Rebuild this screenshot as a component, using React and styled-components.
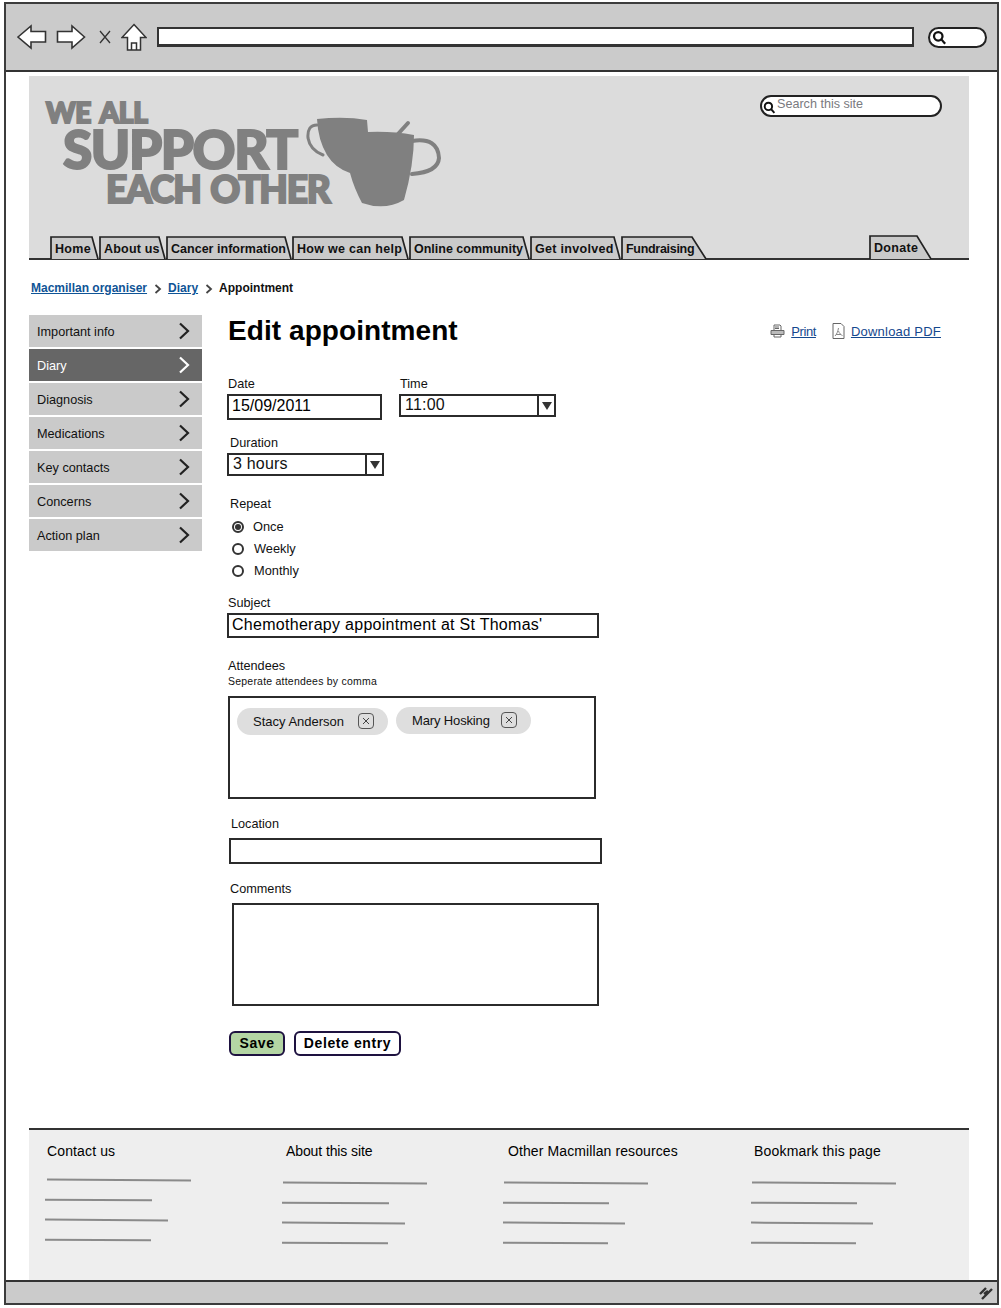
import React from "react";
import styled, { createGlobalStyle } from "styled-components";

const Global = createGlobalStyle`
  html, body { margin: 0; padding: 0; background: #fff; }
  body { font-family: "Liberation Sans", Arial, sans-serif; color: #111; }
  * { box-sizing: border-box; }
`;

const Page = styled.div`
  width: 1001px;
  height: 1308px;
  padding: 2px 2px 3px 4px;
`;
const Win = styled.div`
  height: 100%;
  border: 2px solid #3c3c3c;
  display: flex;
  flex-direction: column;
`;
const Toolbar = styled.div`
  height: 68px;
  flex: none;
  background: #cbcbcb;
  border-bottom: 2px solid #333;
  display: flex;
  align-items: center;
  padding: 0 0 0 11px;
`;
const NavIcon = styled.svg`
  display: block;
  flex: none;
  margin-right: ${p => p.$mr || 0}px;
`;
const AddressBar = styled.div`
  width: 757px;
  height: 20px;
  background: #fff;
  border: 2px solid #333;
  border-bottom-width: 3px;
  margin-right: 14px;
  flex: none;
`;
const BrowserSearch = styled.div`
  width: 59px;
  height: 21px;
  background: #fff;
  border: 2px solid #222;
  border-radius: 11px;
  display: flex;
  align-items: center;
  padding-left: 2px;
`;
const Viewport = styled.div`
  flex: 1;
  min-height: 0;
  padding: 4px 28px 0 23px;
  display: flex;
  flex-direction: column;
`;
const Header = styled.header`
  height: 184px;
  flex: none;
  background: #dcdcdc;
  border-bottom: 2px solid #333;
  display: flex;
  flex-direction: column;
`;
const HeaderTop = styled.div`
  height: 158px;
  flex: none;
  display: flex;
  justify-content: space-between;
  align-items: flex-start;
  padding: 19px 27px 0 16px;
`;
const Logo = styled.div`
  display: flex;
  align-items: flex-start;
  padding-top: 4px;
`;
const LogoText = styled.div`
  width: 261px;
  color: #808080;
  font-family: "Lato", "Liberation Sans", sans-serif;
  font-weight: 900;
  -webkit-text-stroke: 2px #808080;
`;
const LogoLine = styled.div`
  font-size: ${p => p.$size}px;
  line-height: ${p => p.$lh}px;
  margin-left: ${p => p.$ml}px;
  letter-spacing: ${p => p.$ls}px;
  word-spacing: ${p => p.$ws || 0}px;
  white-space: nowrap;
`;
const CupArt = styled.svg`
  display: block;
  flex: none;
  margin-top: 18px;
`;
const SiteSearch = styled.div`
  width: 182px;
  height: 22px;
  background: #fff;
  border: 2px solid #222;
  border-radius: 12px;
  display: flex;
  align-items: flex-start;
  padding: 0 0 0 1px;
  color: #7a7a80;
  font-size: 12.6px;
  line-height: 14px;
`;
const SearchGlass = styled.span`
  margin-top: 4px;
  line-height: 0;
`;
const SearchLabel = styled.span`
  margin-left: 1px;
`;
const Tabs = styled.nav`
  flex: 1;
  display: flex;
  align-items: flex-end;
  padding-left: 21px;
`;
const Tab = styled.div`
  position: relative;
  width: ${p => p.$w}px;
  height: ${p => p.$h}px;
  margin-left: ${p => p.$ml || 0}px;
  padding: 6px 0 0 5px;
  font-size: 12.5px;
  line-height: 16px;
  font-weight: 700;
  letter-spacing: ${p => p.$ls ?? 0.2}px;
  white-space: nowrap;
  flex: none;
`;
const TabLabel = styled.span`
  position: relative;
`;
const TabShape = styled.svg`
  position: absolute;
  left: 0;
  top: 0;
`;
const Crumbs = styled.div`
  height: 55px;
  flex: none;
  padding: 20px 0 0 2px;
  display: flex;
  align-items: flex-start;
  font-size: 12px;
  line-height: 16px;
  font-weight: 700;
`;
const CrumbLink = styled.a`
  color: #0f5496;
  text-decoration: underline;
`;
const CrumbSep = styled.svg`
  margin: 4px 6px 0 7px;
  flex: none;
`;
const Main = styled.div`
  display: flex;
  flex: 1;
  min-height: 0;
  gap: 26px;
`;
const Sidebar = styled.nav`
  width: 173px;
  flex: none;
  display: flex;
  flex-direction: column;
  gap: 2px;
`;
const SideItem = styled.div`
  height: 32px;
  background: ${p => (p.$active ? "#666" : "#cacaca")};
  color: ${p => (p.$active ? "#fff" : "#111")};
  display: flex;
  align-items: center;
  justify-content: space-between;
  padding: 0 12px 0 8px;
  font-size: 12.7px;
`;
const SideLabel = styled.span`
  padding-top: 2px;
`;
const Content = styled.div`
  flex: 1;
  min-width: 0;
  padding-right: 28px;
`;
const TitleRow = styled.div`
  height: 32px;
  display: flex;
  justify-content: space-between;
  align-items: center;
`;
const Title = styled.h1`
  margin: 0;
  font-size: 28px;
  line-height: 32px;
  font-weight: 700;
  letter-spacing: 0.07px;
  color: #000;
`;
const Actions = styled.div`
  display: flex;
  align-items: center;
  font-size: 13px;
`;
const ActionIcon = styled.svg`
  flex: none;
  margin: 0 ${p => p.$mr}px 0 ${p => p.$ml || 0}px;
`;
const ActionLink = styled.a`
  color: #14488e;
  text-decoration: underline;
  letter-spacing: ${p => p.$ls}px;
`;
const Row = styled.div`
  display: flex;
  align-items: flex-start;
  gap: 17px;
  margin-top: ${p => p.$mt || 0}px;
`;
const Field = styled.div`
  margin-top: ${p => p.$mt || 0}px;
`;
const Label = styled.div`
  font-size: 12.7px;
  height: 14px;
  line-height: 16px;
  margin: 0 0 ${p => p.$gap ?? 4}px ${p => p.$ml || 0}px;
`;
const Hint = styled.div`
  font-size: 10.5px;
  line-height: 13px;
  letter-spacing: 0.22px;
  margin-top: 3px;
  margin-bottom: 8px;
`;
const TextBox = styled.div`
  width: ${p => p.$w}px;
  height: ${p => p.$h}px;
  margin-left: ${p => p.$ml || 0}px;
  background: #fff;
  border: 2px solid #2b2b2b;
  padding-left: 3px;
  font-size: 16px;
  line-height: ${p => p.$h - 6}px;
  color: #000;
  letter-spacing: ${p => p.$ls || 0}px;
`;
const Select = styled.div`
  width: ${p => p.$w}px;
  height: 23px;
  margin-left: ${p => p.$ml || 0}px;
  border: 2px solid #2b2b2b;
  display: flex;
  font-size: 16px;
  line-height: 17px;
`;
const SelectValue = styled.div`
  flex: 1;
  padding-left: 4px;
  letter-spacing: 0.2px;
`;
const SelectArrow = styled.div`
  width: 17px;
  border-left: 2px solid #2b2b2b;
  display: flex;
  align-items: center;
  justify-content: center;
  &::after {
    content: "";
    border-left: 5px solid transparent;
    border-right: 5px solid transparent;
    border-top: 8px solid #333;
  }
`;
const Radios = styled.div`
  margin: 5px 0 0 4px;
`;
const RadioRow = styled.div`
  height: 22px;
  display: flex;
  align-items: center;
  font-size: 12.8px;
`;
const RadioDot = styled.span`
  width: 12px;
  height: 12px;
  margin-top: 2px;
  border-radius: 50%;
  border: 2px solid #333;
  margin-right: ${p => (p.$on ? 9 : 10)}px;
  display: flex;
  align-items: center;
  justify-content: center;
  &::after {
    content: "";
    display: ${p => (p.$on ? "block" : "none")};
    width: 6px;
    height: 6px;
    border-radius: 50%;
    background: #333;
  }
`;
const ChipBox = styled.div`
  width: 368px;
  height: 103px;
  border: 2px solid #2b2b2b;
  display: flex;
  align-items: flex-start;
  gap: 8px;
  padding: 9px 0 0 7px;
`;
const Chip = styled.div`
  height: 27px;
  background: #dedede;
  border-radius: 14px;
  display: flex;
  align-items: center;
  padding: 0 14px 0 16px;
  font-size: 13px;
  letter-spacing: ${p => p.$ls || 0}px;
  gap: ${p => p.$gap}px;
  margin-top: ${p => p.$mt || 0}px;
`;
const ChipClose = styled.span`
  width: 16px;
  height: 16px;
  margin-top: -2px;
  border: 1px solid #555;
  border-radius: 4px;
  display: flex;
  align-items: center;
  justify-content: center;
`;
const Buttons = styled.div`
  display: flex;
  gap: 9px;
  margin: 25px 0 0 1px;
`;
const Button = styled.button`
  height: 25px;
  width: ${p => p.$w}px;
  padding: 0 0 2px;
  background: ${p => (p.$primary ? "#b4d5a4" : "#fff")};
  border: 2px solid #1e1240;
  border-radius: 6px;
  font-family: inherit;
  font-size: 14px;
  font-weight: 700;
  letter-spacing: 0.6px;
  color: #000;
`;
const Footer = styled.footer`
  height: 152px;
  flex: none;
  background: #eee;
  border-top: 2px solid #333;
  display: grid;
  grid-template-columns: 239px 222px 246px 1fr;
  padding: 13px 0 0 18px;
`;
const FootCol = styled.div``;
const FootTitle = styled.div`
  font-size: 14px;
  line-height: 16px;
  height: 36px;
  letter-spacing: ${p => p.$ls}px;
  color: #000;
`;
const FootLines = styled.div`
  padding-top: ${p => p.$top}px;
`;
const FootLine = styled.div`
  height: 2px;
  width: ${p => p.$w}px;
  background: #8a8a8a;
  margin: 0 0 18px ${p => p.$ml || 0}px;
  transform: rotate(0.4deg);
`;
const StatusBar = styled.div`
  height: 23px;
  flex: none;
  background: #cbcbcb;
  border-top: 2px solid #333;
  display: flex;
  justify-content: flex-end;
  align-items: center;
  padding-right: 3px;
`;

const Chevron = ({ color = "#222" }) => (
  <svg width="12" height="18" viewBox="0 0 12 18" fill="none">
    <path d="M2 1.5 L10 9 L2 16.5" stroke={color} strokeWidth="2.2" />
  </svg>
);

const Magnifier = ({ size = 12 }) => (
  <svg width={size} height={size} viewBox="0 0 12 12" fill="none">
    <circle cx="5" cy="5" r="3.4" stroke="#111" strokeWidth="1.8" />
    <path d="M7.5 7.5 L10.5 11" stroke="#111" strokeWidth="1.8" />
  </svg>
);

const CloseX = () => (
  <svg width="8" height="8" viewBox="0 0 8 8" fill="none">
    <path d="M1 1 L7 7 M7 1 L1 7" stroke="#444" strokeWidth="1" />
  </svg>
);

const Sep = () => (
  <CrumbSep width="8" height="10" viewBox="0 0 8 10" fill="none">
    <path d="M1.5 1 L6 5 L1.5 9" stroke="#444" strokeWidth="1.8" />
  </CrumbSep>
);

const tabs = [
  ["Home", 49, 0.3],
  ["About us", 67, 0.2],
  ["Cancer information", 126, 0.02],
  ["How we can help", 117, 0.3],
  ["Online community", 121, 0],
  ["Get involved", 91, 0.3],
  ["Fundraising", 85, -0.3],
];

const TabBox = ({ w, ml, ls, h = 24, children, last }) => (
  <Tab $w={w} $ml={ml} $ls={ls} $h={h}>
    <TabShape width={w + 2} height={h} viewBox={`0 0 ${w + 2} ${h}`}>
      <path d={`M1 ${h} V2 H${w - (last ? 14 : 7)} L${w} ${h} Z`} fill="#cacaca" />
      <path
        d={`M1 ${h} V2 H${w - (last ? 14 : 7)} L${w - (last ? 0 : 1)} ${h}`}
        fill="none"
        stroke="#222"
        strokeWidth="1.7"
      />
    </TabShape>
    <TabLabel>{children}</TabLabel>
  </Tab>
);

const side = ["Important info", "Diary", "Diagnosis", "Medications", "Key contacts", "Concerns", "Action plan"];

const footer = [
  ["Contact us", 0.13, [[144, 0], [107, -2], [123, -2], [106, -2]], 0],
  ["About this site", -0.1, [[144, -3], [107, -4], [123, -4], [106, -4]], 3],
  ["Other Macmillan resources", 0.1, [[144, -4], [106, -5], [122, -5], [105, -5]], 3],
  ["Bookmark this page", 0.18, [[144, -2], [106, -3], [122, -3], [105, -3]], 3],
];

export default function App() {
  return (
    <Page>
      <Global />
      <Win>
        <Toolbar>
          <NavIcon width="30" height="26" viewBox="0 0 30 26" $mr="9">
            <path d="M1 13 L14 2 V7.5 H28.5 V18 H14 V24 Z" fill="#fff" stroke="#333" strokeWidth="1.6" />
          </NavIcon>
          <NavIcon width="30" height="26" viewBox="0 0 30 26" $mr="12">
            <path d="M28.5 13 L16 2 V7.5 H1.5 V18 H16 V24 Z" fill="#fff" stroke="#333" strokeWidth="1.6" />
          </NavIcon>
          <NavIcon width="14" height="16" viewBox="0 0 14 16" $mr="9">
            <path d="M2 2 L12 14 M12 2 L2 14" stroke="#333" strokeWidth="1.3" fill="none" />
          </NavIcon>
          <NavIcon width="26" height="29" viewBox="0 0 26 29" $mr="10">
            <path d="M13 1.5 L25 14.5 H19.5 V27 H6.5 V14.5 H1 Z" fill="#fff" stroke="#333" strokeWidth="1.5" />
            <path d="M10.5 27 V20 H15.5 V27" fill="none" stroke="#333" strokeWidth="1.5" />
          </NavIcon>
          <AddressBar />
          <BrowserSearch>
            <Magnifier size={15} />
          </BrowserSearch>
        </Toolbar>
        <Viewport>
          <Header>
            <HeaderTop>
              <Logo>
                <LogoText>
                  <LogoLine $size={28} $lh={27} $ml={1} $ls={-0.3} $ws={3}>WE ALL</LogoLine>
                  <LogoLine $size={53} $lh={45} $ml={18} $ls={-1.4}>SUPPORT</LogoLine>
                  <LogoLine $size={37} $lh={35} $ml={61} $ls={-1.2} $ws={2}>EACH OTHER</LogoLine>
                </LogoText>
                <CupArt width="136" height="92" viewBox="306 117 136 92">
                  <path
                    d="M317 119 Q345 116 367 120 L368 132 Q392 131 414 135 Q414 165 404 200 Q385 211 362 203 Q354 188 350 173 Q335 168 327 155 Q318 140 317 119 Z"
                    fill="#808080"
                  />
                  <g fill="none" stroke="#808080" strokeLinecap="round">
                    <path d="M317 125 Q307 125 308 138 Q310 150 323 155" strokeWidth="3" />
                    <path d="M412 141 Q438 137 439 158 Q438 172 412 174" strokeWidth="4" />
                    <path d="M398 134 L408 123" strokeWidth="4" />
                  </g>
                </CupArt>
              </Logo>
              <SiteSearch>
                <SearchGlass><Magnifier size={13} /></SearchGlass>
                <SearchLabel>Search this site</SearchLabel>
              </SiteSearch>
            </HeaderTop>
            <Tabs>
              {tabs.map(([t, w, ls], i) => (
                <TabBox key={t} w={w} ls={ls} last={i === tabs.length - 1}>{t}</TabBox>
              ))}
              <TabBox w={62} ml={163} ls={0.3} h={25} last>Donate</TabBox>
            </Tabs>
          </Header>
          <Crumbs>
            <CrumbLink>Macmillan organiser</CrumbLink>
            <Sep />
            <CrumbLink>Diary</CrumbLink>
            <Sep />
            <span>Appointment</span>
          </Crumbs>
          <Main>
            <Sidebar>
              {side.map(s => (
                <SideItem key={s} $active={s === "Diary"}>
                  <SideLabel>{s}</SideLabel>
                  <Chevron color={s === "Diary" ? "#fff" : "#222"} />
                </SideItem>
              ))}
            </Sidebar>
            <Content>
              <TitleRow>
                <Title>Edit appointment</Title>
                <Actions>
                  <ActionIcon width="15" height="14" viewBox="0 0 15 14" $mr="6" fill="none" stroke="#666" strokeWidth="1">
                    <path d="M4 6 V1 H10 L11 2 V6" />
                    <path d="M1 6.5 H14 V10.5 H1 Z" fill="#bbb" />
                    <path d="M4 10.5 V13 H11 V10.5" />
                    <path d="M5 3 H9 M5 4.5 H9" />
                  </ActionIcon>
                  <ActionLink $ls={-0.4}>Print</ActionLink>
                  <ActionIcon width="13" height="16" viewBox="0 0 13 16" $ml="16" $mr="6" fill="none" stroke="#666" strokeWidth="1">
                    <path d="M1 .5 H9 L12 3.5 V15.5 H1 Z" />
                    <path d="M6.5 5 C6 8 5 11 3 13 M6.5 8 C7 10 9 12 10.5 12.5 M4 11.5 H9" stroke="#888" />
                  </ActionIcon>
                  <ActionLink $ls={0.22}>Download PDF</ActionLink>
                </Actions>
              </TitleRow>
              <Row $mt={29}>
                <Field>
                  <Label>Date</Label>
                  <TextBox $w={155} $h={26} $ml={-1}>15/09/2011</TextBox>
                </Field>
                <Field>
                  <Label $ml={1}>Time</Label>
                  <Select $w={157}>
                    <SelectValue>11:00</SelectValue>
                    <SelectArrow />
                  </Select>
                </Field>
              </Row>
              <Field $mt={15}>
                <Label $ml={2}>Duration</Label>
                <Select $w={157} $ml={-1}>
                  <SelectValue>3 hours</SelectValue>
                  <SelectArrow />
                </Select>
              </Field>
              <Field $mt={20}>
                <Label $ml={2} $gap={0}>Repeat</Label>
                <Radios>
                  <RadioRow><RadioDot $on />Once</RadioRow>
                  <RadioRow><RadioDot />Weekly</RadioRow>
                  <RadioRow><RadioDot />Monthly</RadioRow>
                </Radios>
              </Field>
              <Field $mt={14}>
                <Label>Subject</Label>
                <TextBox $w={372} $h={25} $ml={-1} $ls={0.28}>Chemotherapy appointment at St Thomas'</TextBox>
              </Field>
              <Field $mt={20}>
                <Label $gap={0}>Attendees</Label>
                <Hint>Seperate attendees by comma</Hint>
                <ChipBox>
                  <Chip $mt={1} $gap={14}>Stacy Anderson<ChipClose><CloseX /></ChipClose></Chip>
                  <Chip $gap={11} $ls={-0.15}>Mary Hosking<ChipClose><CloseX /></ChipClose></Chip>
                </ChipBox>
              </Field>
              <Field $mt={17}>
                <Label $ml={3} $gap={8}>Location</Label>
                <TextBox $w={373} $h={26} $ml={1} />
              </Field>
              <Field $mt={17}>
                <Label $ml={2} $gap={8}>Comments</Label>
                <TextBox $w={367} $h={103} $ml={4} />
              </Field>
              <Buttons>
                <Button $primary $w={56}>Save</Button>
                <Button $w={107}>Delete entry</Button>
              </Buttons>
            </Content>
          </Main>
          <Footer>
            {footer.map(([t, tls, ls, top]) => (
              <FootCol key={t}>
                <FootTitle $ls={tls}>{t}</FootTitle>
                <FootLines $top={top}>
                  {ls.map(([w, ml], i) => (
                    <FootLine key={i} $w={w} $ml={ml} />
                  ))}
                </FootLines>
              </FootCol>
            ))}
          </Footer>
        </Viewport>
        <StatusBar>
          <svg width="16" height="16" viewBox="0 0 16 16" fill="none">
            <path d="M2 9 L8 3 M4 14 L14 4 M6 9 L10 6" stroke="#333" strokeWidth="2.4" />
          </svg>
        </StatusBar>
      </Win>
    </Page>
  );
}
